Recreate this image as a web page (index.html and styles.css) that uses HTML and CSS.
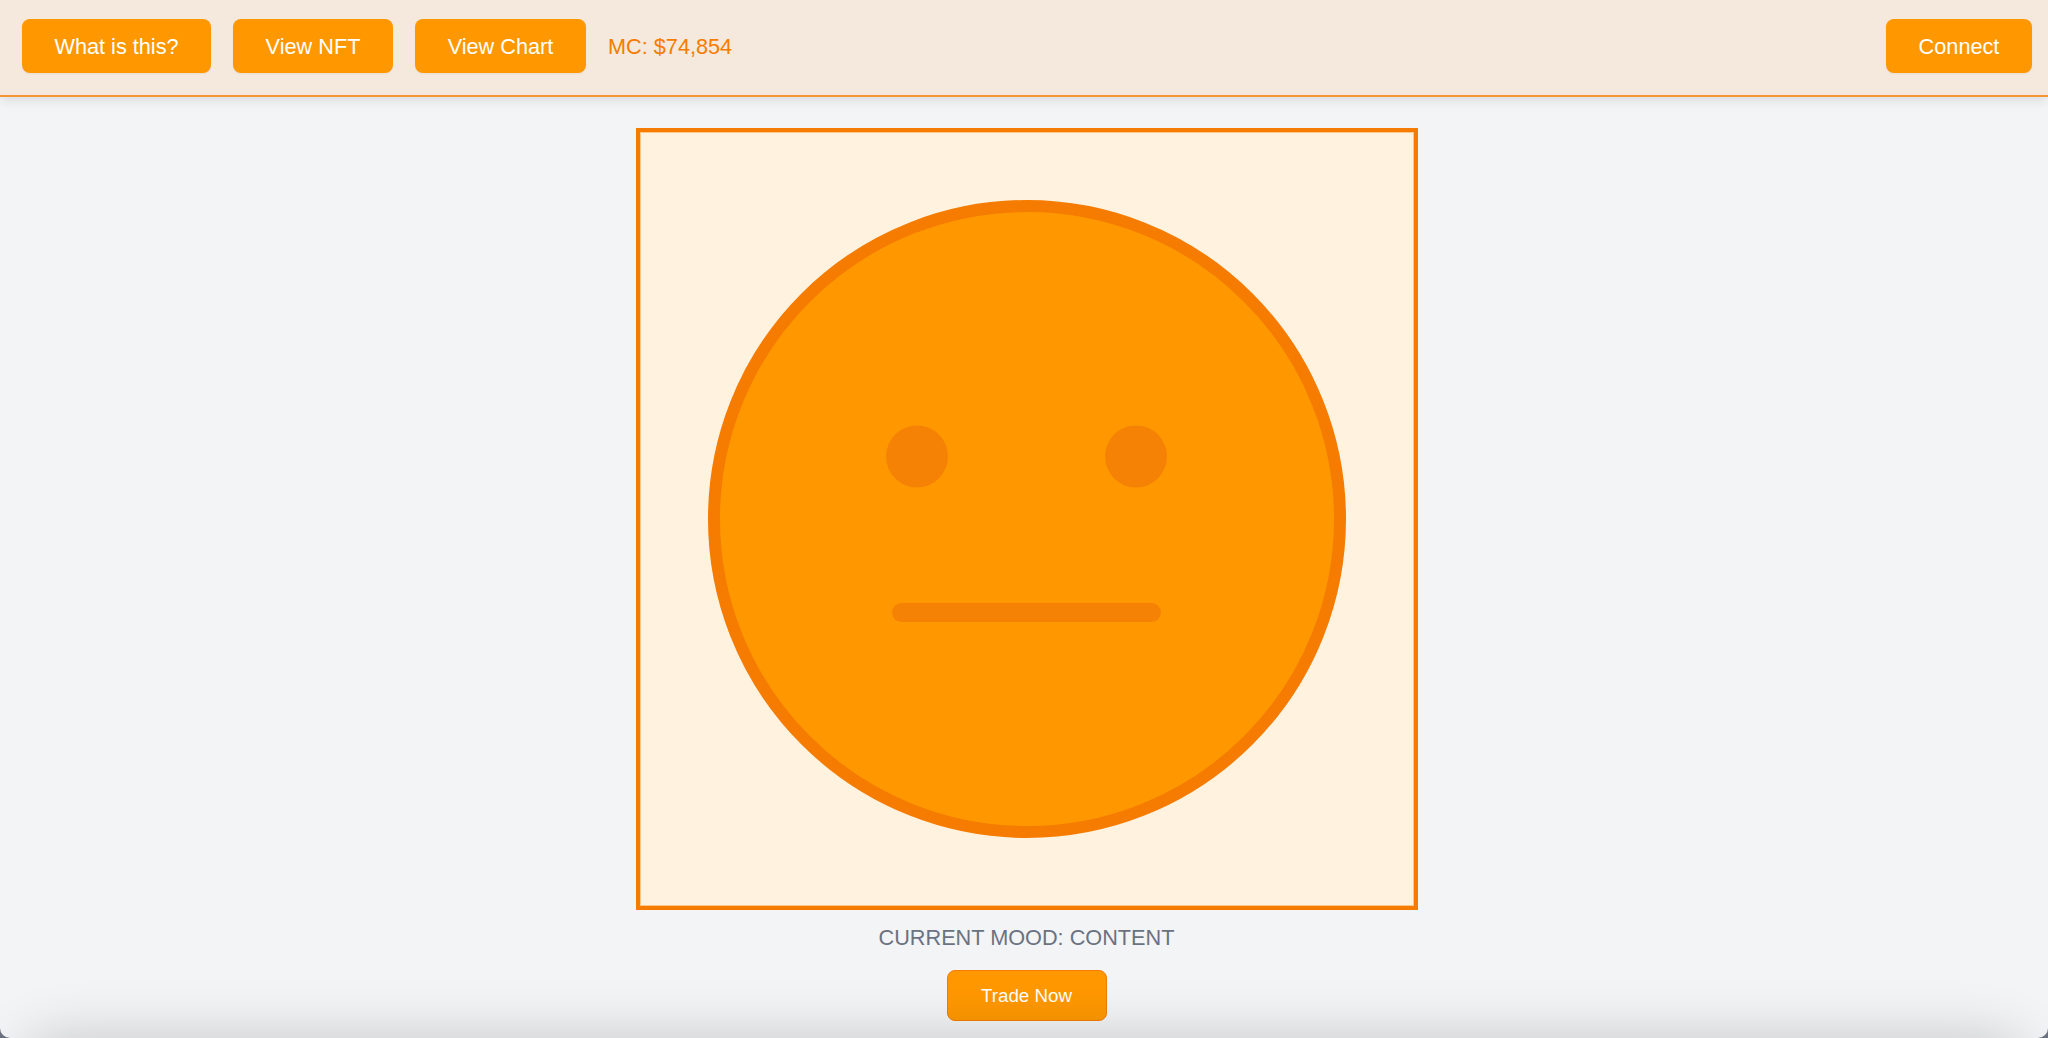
FILE: index.html
```html
<!DOCTYPE html>
<html lang="en">

<head>
    <meta charset="UTF-8">
    <meta name="viewport" content="width=device-width, initial-scale=1.0">
    <title>Mood</title>
    <link rel="stylesheet" href="styles.css">
</head>

<body>
    <header class="topbar">
        <div class="topbar-left">
            <button class="btn btn-what">What is this?</button>
            <button class="btn btn-nft">View NFT</button>
            <button class="btn btn-chart">View Chart</button>
            <span class="market-cap">MC: $74,854</span>
        </div>
        <button class="btn btn-connect">Connect</button>
    </header>

    <main class="content">
        <div class="mood-box">
            <svg class="face" viewBox="-1 -1 774 774">
                <circle class="face-head" cx="386" cy="386" r="313"></circle>
                <circle class="face-part" cx="276" cy="323.5" r="31"></circle>
                <circle class="face-part" cx="495" cy="323.5" r="31"></circle>
                <rect class="face-part" x="251" y="470" width="269" height="19" rx="9.5"></rect>
            </svg>
        </div>
        <p class="mood-label">CURRENT MOOD: CONTENT</p>
        <button class="btn-trade">Trade Now</button>
    </main>

    <div class="window-shadow"></div>
</body>

</html>
```

FILE: styles.css
```css
* {
    box-sizing: border-box;
}

html {
    background: #6b7280;
}

body {
    margin: 0;
    height: 100vh;
    overflow: hidden;
    background: #f3f4f6;
    border-radius: 0 0 10px 10px;
    font-family: "Liberation Sans", Arial, sans-serif;
}

.topbar {
    height: 97px;
    padding: 19px 16px 22px 22px;
    display: flex;
    justify-content: space-between;
    align-items: flex-start;
    background: #f5e8dc;
    border-bottom: 2px solid #f79433;
    box-shadow: 0 4px 10px rgba(0, 0, 0, 0.09);
}

.topbar-left {
    display: flex;
    align-items: center;
    gap: 22px;
}

.btn {
    height: 54px;
    padding: 1px 0 0;
    background: #ff9800;
    color: #fff;
    border: 0;
    border-radius: 8px;
    font-family: inherit;
    font-size: 21.7px;
    box-shadow: 0 1px 2px rgba(0, 0, 0, 0.05);
    cursor: pointer;
}

.btn-what {
    width: 189px;
}

.btn-nft {
    width: 160px;
}

.btn-chart {
    width: 171px;
}

.btn-connect {
    width: 146px;
}

.market-cap {
    padding-top: 1px;
    color: #f57c00;
    font-size: 21.7px;
}

.content {
    padding: 31px 0 0 5px;
    display: flex;
    flex-direction: column;
    align-items: center;
}

.mood-box {
    width: 782px;
    height: 782px;
    background: #fff3e0;
    border: 4px solid #f57c00;
    box-shadow: inset 0 0 0 1px #fcc88a;
}

.face {
    display: block;
    width: 774px;
    height: 774px;
}

.face-head {
    fill: #ff9800;
    stroke: #f57c00;
    stroke-width: 12;
}

.face-part {
    fill: #f58204;
}

.mood-label {
    margin: 15px 0 20px;
    height: 25px;
    line-height: 25px;
    color: #6b7280;
    font-size: 21.7px;
}

.btn-trade {
    width: 160px;
    height: 51px;
    padding: 0;
    background: #ff9800;
    color: #fff;
    border: 1px solid #f57c00;
    border-radius: 8px;
    font-family: inherit;
    font-size: 18.8px;
    cursor: pointer;
}

/* soft shadow along the bottom edge of the window */
.window-shadow {
    position: fixed;
    left: 40px;
    right: 40px;
    top: 1058px;
    height: 30px;
    border-radius: 30px;
    box-shadow: 0 0 60px 18px rgba(0, 0, 0, 0.2);
    pointer-events: none;
}
```
